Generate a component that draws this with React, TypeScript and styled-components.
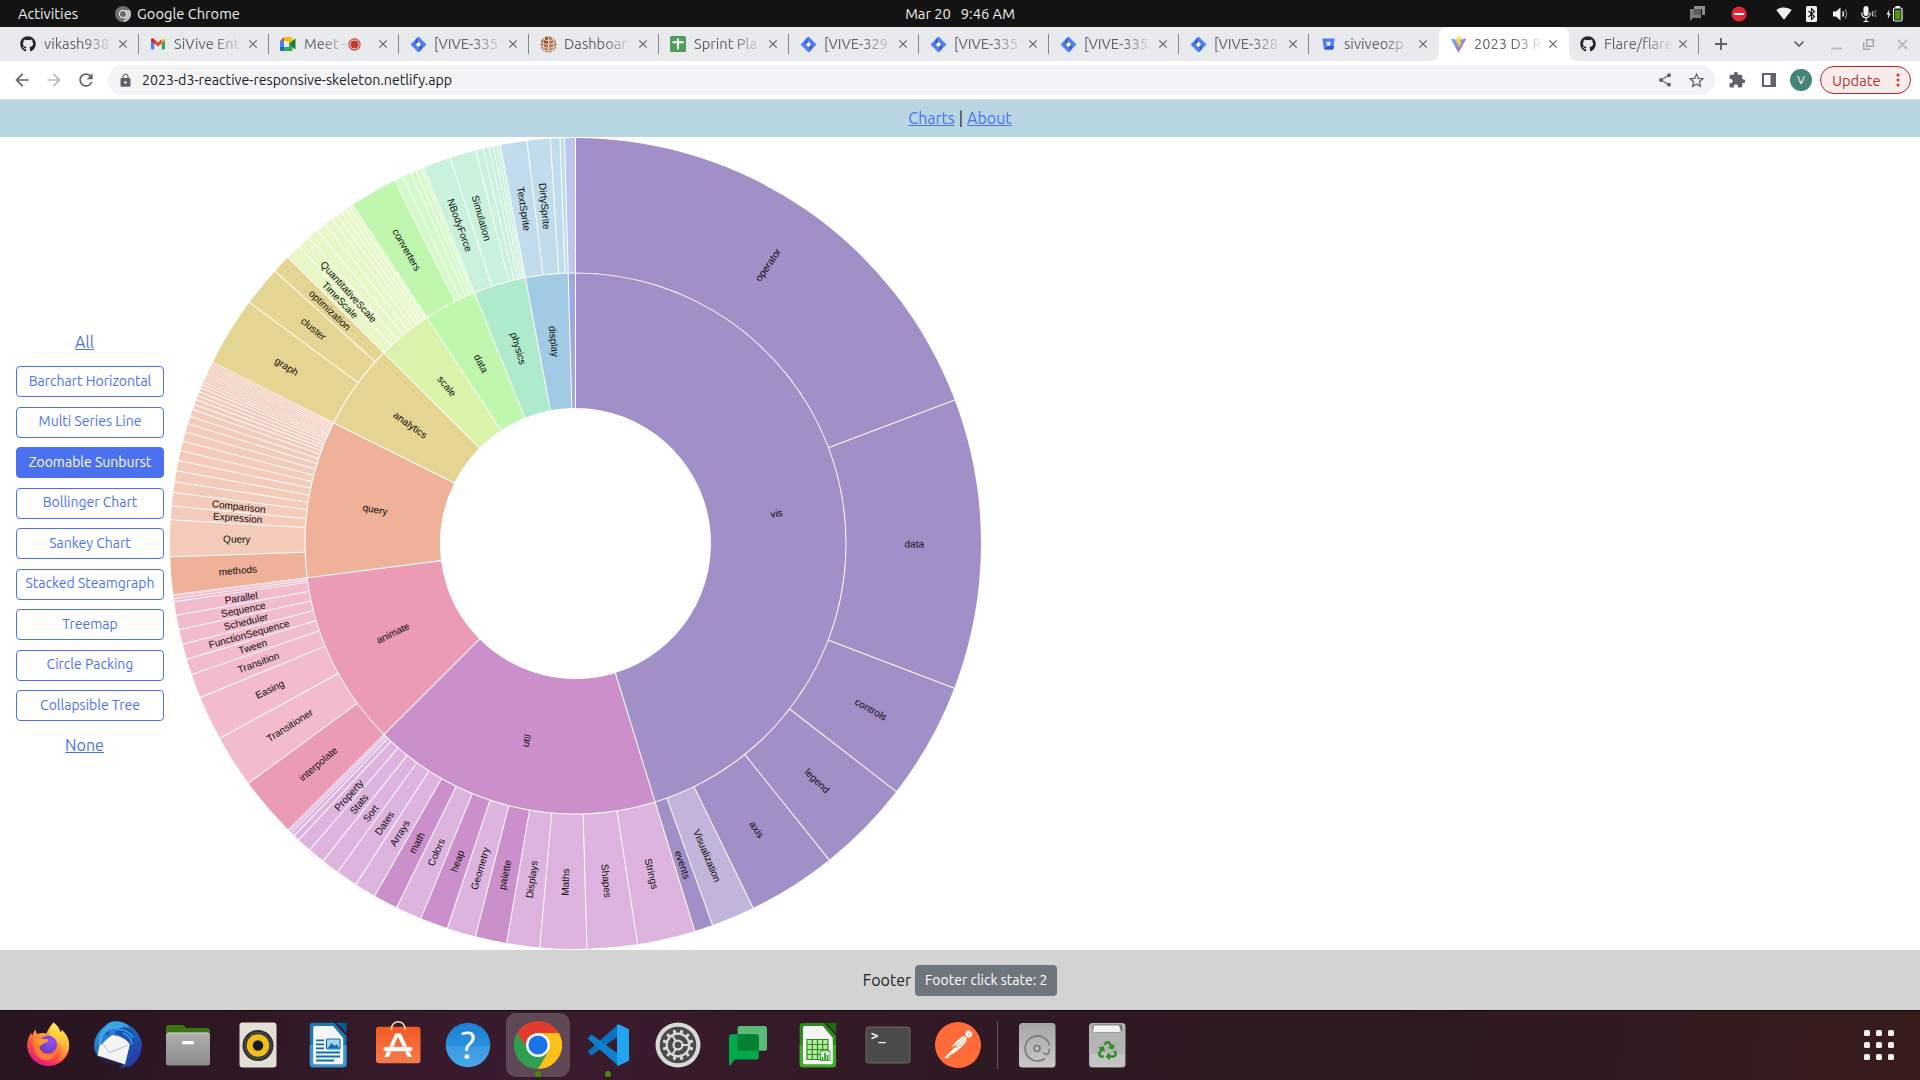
import React from "react";
import styled, { createGlobalStyle, css } from "styled-components";
import { FaGithub, FaRecycle } from "react-icons/fa";
import { MdStarBorder, MdShare, MdExtension, MdArrowBack, MdArrowForward, MdRefresh, MdLock, MdClose } from "react-icons/md";
import { SiPostman } from "react-icons/si";

const uiFont = `Ubuntu, "Noto Sans", "Open Sans", sans-serif`;

const GlobalStyle = createGlobalStyle`
  *, *::before, *::after { box-sizing: border-box; }
  html, body { margin: 0; padding: 0; overflow: hidden; background: #fff; }
  body { font-family: ${uiFont}; color: #212529; }
  svg { display: block; flex: none; }
`;

const Screen = styled.div`
  width: 1920px;
  height: 1080px;
  display: flex;
  flex-direction: column;
  overflow: hidden;
`;

/* ---------- desktop top bar ---------- */

const TopBar = styled.header`
  height: 27px;
  flex: none;
  background: #131313;
  color: #f0f0f0;
  font-size: 14.67px;
  line-height: 27px;
  display: grid;
  grid-template-columns: 1fr auto 1fr;
  align-items: center;
  white-space: pre;
`;
const TopLeft = styled.div`
  display: flex;
  align-items: center;
  padding-left: 18px;
`;
const AppMenu = styled.div`
  display: flex;
  align-items: center;
  gap: 6px;
  margin-left: 37px;
`;
const Clock = styled.div`
  display: flex;
  gap: 10px;
  font-size: 14.67px;
  line-height: 26px;
`;
const Tray = styled.div`
  display: flex;
  justify-content: flex-end;
  align-items: center;
  padding-right: 3px;
`;
const TrayItem = styled.div<{ $w: number }>`
  width: ${(p) => p.$w}px;
  display: flex;
  justify-content: center;
`;

/* ---------- browser chrome ---------- */

const TabStrip = styled.div`
  height: 34px;
  flex: none;
  background: #e8eaed;
  padding-left: 9px;
  display: flex;
`;
const TabBox = styled.div<{ $active?: boolean; $line?: boolean }>`
  position: relative;
  width: 130px;
  height: 34px;
  padding-left: 11px;
  display: flex;
  align-items: center;
  ${(p) =>
    p.$active &&
    css`
      background: #fff;
      border-radius: 8px 8px 0 0;
      &::before,
      &::after {
        content: "";
        position: absolute;
        bottom: 0;
        width: 8px;
        height: 8px;
      }
      &::before {
        left: -8px;
        background: radial-gradient(circle at 0 0, #e8eaed 7.5px, #fff 8px);
      }
      &::after {
        right: -8px;
        background: radial-gradient(circle at 100% 0, #e8eaed 7.5px, #fff 8px);
      }
    `}
`;
const TabIcon = styled.span`
  width: 16px;
  height: 16px;
  display: flex;
  align-items: center;
  justify-content: center;
`;
const TabTitle = styled.span<{ $w?: number }>`
  width: ${(p) => p.$w ?? 67}px;
  margin-left: 8px;
  overflow: hidden;
  white-space: nowrap;
  font-size: 14.67px;
  line-height: 20px;
  color: #5f6368;
  mask-image: linear-gradient(90deg, #000 calc(100% - 28px), rgba(0, 0, 0, 0.1) 100%);
`;
const TabClose = styled.span`
  margin-left: auto;
  margin-right: 8px;
  color: #5f6368;
`;
const TabLine = styled.span<{ $hidden?: boolean }>`
  width: 1px;
  height: 20px;
  background: ${(p) => (p.$hidden ? "transparent" : "#85888c")};
`;
const NewTab = styled.div`
  display: flex;
  align-items: center;
  padding-left: 15px;
`;
const WindowButtons = styled.div`
  margin-left: auto;
  margin-right: 12px;
  display: flex;
  align-items: center;
`;
const WindowButton = styled.span<{ $gap: number }>`
  margin-left: ${(p) => p.$gap}px;
`;

const Toolbar = styled.div`
  height: 39px;
  flex: none;
  background: #fff;
  border-bottom: 1px solid #d9dadc;
  display: flex;
  align-items: center;
  padding: 0 9px 0 12px;
`;
const NavButtons = styled.div`
  width: 96px;
  display: flex;
  gap: 12px;
  color: #5f6368;
  svg:nth-child(2) { color: #babcbe; }
`;
const Omnibox = styled.div`
  width: 1607px;
  height: 30px;
  border-radius: 15px;
  background: #f1f3f4;
  display: flex;
  align-items: center;
  padding: 0 9px 0 10px;
  font-size: 14.2px;
  color: #202124;
`;
const Url = styled.span`
  margin-left: 9px;
  margin-right: auto;
`;
const OmniIcon = styled.span`
  color: #5f6368;
  margin-left: 14px;
`;
const ToolIcons = styled.div`
  display: flex;
  align-items: center;
  color: #5f6368;
  margin-left: 13px;
  gap: 16px;
`;
const Avatar = styled.span`
  width: 22px;
  height: 22px;
  border-radius: 50%;
  background: #448577;
  color: #fff;
  font-size: 12px;
  line-height: 22px;
  text-align: center;
  margin-left: -2px;
`;
const UpdateButton = styled.div`
  margin-left: auto;
  width: 91px;
  height: 28px;
  border: 1px solid #b3261e;
  border-radius: 14px;
  background: #f8ecec;
  color: #b3332c;
  font-size: 14.67px;
  display: flex;
  align-items: center;
  justify-content: space-between;
  padding: 0 10px 0 11px;
`;

/* ---------- page ---------- */

const Nav = styled.nav`
  height: 37px;
  flex: none;
  background: #b9d7e2;
  display: flex;
  align-items: center;
  justify-content: center;
  gap: 4px;
  padding-bottom: 1px;
  font-size: 16px;
`;
const Link = styled.a`
  color: #4b71f0;
  text-decoration: underline;
`;
const Main = styled.main`
  flex: 1;
  min-height: 0;
  display: flex;
`;
const Sidebar = styled.aside`
  width: 169px;
  padding: 191px 5px 0 16px;
  display: flex;
  flex-direction: column;
`;
const SideLink = styled(Link)`
  width: 137px;
  height: 28px;
  text-align: center;
  font-size: 16px;
  line-height: 28px;
`;
const ButtonList = styled.div`
  margin: 10px 0 9.5px;
  display: flex;
  flex-direction: column;
  gap: 9.5px;
`;
const ChartButton = styled.button<{ $active?: boolean }>`
  width: 148px;
  height: 31px;
  padding: 0 0 2px;
  border: 1px solid #4b71f0;
  border-radius: 4px;
  background: ${(p) => (p.$active ? "#4b71f0" : "#fff")};
  color: ${(p) => (p.$active ? "#fff" : "#4b71f0")};
  font-family: inherit;
  font-size: 14px;
  white-space: nowrap;
`;
const Footer = styled.footer`
  height: 60px;
  flex: none;
  background: #d3d3d3;
  display: flex;
  align-items: center;
  justify-content: center;
  gap: 4px;
  padding-bottom: 1px;
  font-size: 16px;
`;
const FooterButton = styled.button`
  width: 142px;
  height: 31px;
  margin-top: 2px;
  border: 0;
  border-radius: 4px;
  background: #6f757d;
  color: #fff;
  font-family: inherit;
  font-size: 14px;
  padding: 0 0 1px;
`;

/* ---------- sunburst ---------- */

type Leaf = [name: string, value: number, branch?: boolean];
type Group = { name: string; color: [number, number, number]; items: Leaf[] };

const flare: Group[] = [
  {
    name: "vis", color: [163, 143, 200],
    items: [["operator", 183967, true], ["data", 110583, true], ["controls", 44639, true], ["legend", 36003, true], ["axis", 33886, true], ["Visualization", 16540], ["events", 7011, true]],
  },
  {
    name: "util", color: [203, 143, 204],
    items: [["Strings", 22026], ["Shapes", 19118], ["Maths", 17705], ["Displays", 12555], ["palette", 11946, true], ["Geometry", 10993], ["heap", 10587, true], ["Colors", 10001], ["math", 9346, true], ["Arrays", 8258], ["Dates", 8217], ["Sort", 6887], ["Stats", 6557], ["Property", 5559], ["Filter", 2324], ["Orientation", 1486], ["IValueProxy", 874], ["IPredicate", 383], ["IEvaluable", 335]],
  },
  {
    name: "animate", color: [236, 155, 180],
    items: [["interpolate", 23081, true], ["Transitioner", 19975], ["Easing", 17010], ["Transition", 9201], ["Tween", 6006], ["FunctionSequence", 5842], ["Scheduler", 5593], ["Sequence", 5534], ["Parallel", 5176], ["TransitionEvent", 1116], ["ISchedulable", 1041], ["Pause", 449]],
  },
  {
    name: "query", color: [239, 177, 152],
    items: [["methods", 14326, true], ["Query", 13896], ["Expression", 5130], ["Comparison", 5103], ["DateUtil", 4141], ["StringUtil", 4130], ["Arithmetic", 3891], ["Match", 3748], ["CompositeExpression", 3677], ["ExpressionIterator", 3617], ["Fn", 3240], ["BinaryExpression", 2893], ["If", 2732], ["IsA", 2039], ["Variance", 1876], ["AggregateExpression", 1616], ["Range", 1594], ["Not", 1554], ["Literal", 1214], ["Variable", 1124], ["Xor", 1101], ["And", 1027], ["Or", 970], ["Distinct", 933], ["Average", 891], ["Maximum", 843], ["Minimum", 843], ["Sum", 791], ["Count", 781]],
  },
  {
    name: "analytics", color: [229, 213, 146],
    items: [["graph", 26435, true], ["cluster", 15207, true], ["optimization", 7074, true]],
  },
  {
    name: "scale", color: [217, 244, 170],
    items: [["TimeScale", 5833], ["QuantitativeScale", 4839], ["Scale", 4268], ["OrdinalScale", 3770], ["LogScale", 3151], ["QuantileScale", 2435], ["IScaleMap", 2105], ["ScaleType", 1821], ["RootScale", 1756], ["LinearScale", 1316]],
  },
  {
    name: "data", color: [191, 247, 175],
    items: [["converters", 18349, true], ["DataSource", 3331], ["DataUtil", 3322], ["DataSchema", 2165], ["DataField", 1759], ["DataTable", 772], ["DataSet", 586]],
  },
  {
    name: "physics", color: [174, 234, 203],
    items: [["NBodyForce", 10498], ["Simulation", 9983], ["Particle", 2822], ["Spring", 2213], ["SpringForce", 1681], ["GravityForce", 1336], ["DragForce", 1082], ["IForce", 319]],
  },
  {
    name: "display", color: [161, 202, 228],
    items: [["TextSprite", 10066], ["DirtySprite", 8833], ["RectSprite", 3623], ["LineSprite", 1732]],
  },
  { name: "flex", color: [159, 168, 230], items: [["FlareVis", 4116]] },
];

const SIZE = 813;
const RING = SIZE / 6;

const arcPath = (a0: number, a1: number, level: number) => {
  const r0 = level * RING;
  const r1 = (level + 1) * RING - 1;
  const half = Math.min((a1 - a0) / 2, 0.005) / 2;
  const padR = RING * 1.5;
  const inset = (r: number): [number, number] => {
    const p = Math.asin(Math.min(1, (padR / r) * Math.sin(half)));
    const mid = (a0 + a1) / 2;
    return a1 - a0 - 2 * p > 1e-6 ? [a0 + p, a1 - p] : [mid, mid];
  };
  const at = (r: number, a: number) => `${(r * Math.sin(a)).toFixed(3)},${(-r * Math.cos(a)).toFixed(3)}`;
  const [o0, o1] = inset(r1);
  const [i0, i1] = inset(r0);
  const big = (s: number, e: number) => (e - s > Math.PI ? 1 : 0);
  return `M${at(r1, o0)}A${r1},${r1} 0 ${big(o0, o1)} 1 ${at(r1, o1)}L${at(r0, i1)}A${r0},${r0} 0 ${big(i0, i1)} 0 ${at(r0, i0)}Z`;
};

const shade = (c: [number, number, number], solid: boolean) =>
  `rgb(${c.map((v) => Math.round(solid ? v : 255 - ((255 - v) * 2) / 3)).join(",")})`;

const ChartLabel = styled.text`
  font: 10px "Liberation Sans", Arial, sans-serif;
  text-anchor: middle;
  fill: #0b0b0b;
  user-select: none;
`;

type Slice = { key: string; name: string; a0: number; a1: number; level: number; fill: string };

const buildSlices = (): Slice[] => {
  const total = flare.reduce((s, g) => s + g.items.reduce((t, i) => t + i[1], 0), 0);
  const k = (2 * Math.PI) / total;
  const out: Slice[] = [];
  let a = 0;
  flare.forEach((g) => {
    const start = a;
    g.items.forEach(([name, value, branch]) => {
      out.push({ key: `${g.name}/${name}`, name, a0: a, a1: a + value * k, level: 2, fill: shade(g.color, !!branch) });
      a += value * k;
    });
    out.push({ key: g.name, name: g.name, a0: start, a1: a, level: 1, fill: shade(g.color, true) });
  });
  return out;
};

const slices = buildSlices();

const Sunburst = () => (
  <svg width={SIZE} height={SIZE} viewBox={`${-SIZE / 2} ${-SIZE / 2} ${SIZE} ${SIZE}`}>
    {slices.map((s) => (
      <path key={s.key} d={arcPath(s.a0, s.a1, s.level)} fill={s.fill} />
    ))}
    {slices
      .filter((s) => s.a1 - s.a0 > 0.03)
      .map((s) => {
        const deg = ((s.a0 + s.a1) / 2) * (180 / Math.PI);
        return (
          <ChartLabel
            key={s.key}
            dy="0.35em"
            transform={`rotate(${deg - 90}) translate(${(s.level + 0.5) * RING},0) rotate(${deg < 180 ? 0 : 180})`}
          >
            {s.name}
          </ChartLabel>
        );
      })}
  </svg>
);

/* ---------- favicons ---------- */

const GmailIcon = () => (
  <svg width="14" height="12" viewBox="0 0 14 11">
    <path d="M0 1.5V10a1 1 0 0 0 1 1h2.2V4.5z" fill="#4285f4" />
    <path d="M14 1.5V10a1 1 0 0 1-1 1h-2.200V4.500z" fill="#34a853" />
    <path d="M14 1.600L10.800 4.800V1.200C12.400-.2 14-.2 14 1.600z" fill="#fbbc04" />
    <path d="M0 1.600C0-.2 1.800-.5 3.200.8L7 3.900 10.800.8v4L7 7.900 3.200 4.900z" fill="#ea4335" />
    <path d="M0 1.600C0 0 1.700-.4 3.200.8v4.100L0 2.600z" fill="#c5221f" />
  </svg>
);
const MeetIcon = () => (
  <svg width="16" height="14" viewBox="0 0 16 14">
    <path d="M0 4L4 0v4z" fill="#ea4335" />
    <path d="M0 4h4v6H0z" fill="#4285f4" />
    <path d="M0 10h4v4H1.200A1.200 1.200 0 0 1 0 12.800z" fill="#1967d2" />
    <path d="M4 0h7.500a1 1 0 0 1 1 1v3.500L9 7V4H4z" fill="#fbbc04" />
    <path d="M4 10h5V7l3.500 3v3a1 1 0 0 1-1 1H4z" fill="#34a853" />
    <path d="M9 7l5.500-5c.6-.4 1-.1 1 .5v9c0 .6-.4.900-1 .5z" fill="#188038" />
  </svg>
);
const JiraIcon = () => (
  <svg width="17" height="17" viewBox="0 0 17 17">
    <path d="M8.500.5L16.500 8.500 8.500 16.500.5 8.500z" fill="#4f7ff5" />
    <path d="M8.500.5c-2 2-2 4 0 5.800L5.500 9V3.500zM8.500 16.500c2-2 2-4 0-5.800l3-2.700v5.500z" fill="#2c56cf" />
    <path d="M8.500 5.800l2.700 2.700-2.700 2.700-2.700-2.700z" fill="#fff" />
  </svg>
);
const GlobeIcon = () => (
  <svg width="17" height="17" viewBox="0 0 17 17" fill="none" stroke="#f0dccf" strokeWidth=".9">
    <circle cx="8.500" cy="8.500" r="8" fill="#b0785a" stroke="none" />
    <path d="M8 .6C4 1 1.500 4 1 7c2 1.500 4 2 7 1.500z" fill="#9a4f2a" stroke="none" />
    <path d="M1 6c4 3 11 3 15 0M.7 9.500c4 3.500 12 3.500 15.600 0M2.500 13c3.500 2.500 8.500 2.500 12 0M3 3c3 2 8 2 11 0M8.500 1v15.500M5 1.500c-2.500 4-2.500 10 0 14M12 1.500c2.500 4 2.500 10 0 14" />
  </svg>
);
const SheetsIcon = () => (
  <svg width="16" height="16" viewBox="0 0 16 16">
    <rect width="16" height="16" rx="1.500" fill="#4f9f5c" />
    <path d="M2.500 6.200h11M8 2.500v11" stroke="#fff" strokeWidth="1.900" />
  </svg>
);
const BitbucketIcon = () => (
  <svg width="13" height="12" viewBox="0 0 13 12">
    <path d="M.3.5h12.400L11 11.500H2z" fill="#4f7ff5" />
    <path d="M6 8h6l-.8 3.500H2z" fill="#2c56cf" />
    <path d="M4.300 3.800h4.400L8 7.800H5z" fill="#e8eefc" />
  </svg>
);
const ViteIcon = () => (
  <svg width="17" height="17" viewBox="0 0 17 17">
    <defs>
      <linearGradient id="vite-v" x1="0" y1="0" x2=".7" y2="1">
        <stop offset="0" stopColor="#5cc8f7" />
        <stop offset="1" stopColor="#a649f0" />
      </linearGradient>
      <linearGradient id="vite-b" x1="0" y1="0" x2="0" y2="1">
        <stop offset="0" stopColor="#fbe35c" />
        <stop offset="1" stopColor="#f5a623" />
      </linearGradient>
    </defs>
    <path d="M.5 2.500l7.800 1.400 8.200-1.400L8.500 16.500z" fill="url(#vite-v)" />
    <path d="M12 .3L6.500 1.400 6.100 7.500l1.700-.4-.5 2.500 1.500-.4-1 5.300 4.300-8.300-1.900.3z" fill="url(#vite-b)" />
  </svg>
);
const GithubIcon = () => <FaGithub size={16} color="#24292e" />;
const RecordIcon = () => (
  <svg width="13" height="13" viewBox="0 0 13 13">
    <circle cx="6.500" cy="6.500" r="5.600" fill="none" stroke="#c5392f" strokeWidth="1.100" />
    <circle cx="6.500" cy="6.500" r="4" fill="#c5392f" />
  </svg>
);

type TabDef = { title: string; icon: React.FC; active?: boolean; recording?: boolean; line?: boolean };
const tabs: TabDef[] = [
  { title: "vikash938", icon: GithubIcon },
  { title: "SiVive Ent", icon: GmailIcon },
  { title: "Meet –", icon: MeetIcon, recording: true },
  { title: "[VIVE-335", icon: JiraIcon },
  { title: "Dashboar", icon: GlobeIcon },
  { title: "Sprint Pla", icon: SheetsIcon },
  { title: "[VIVE-329", icon: JiraIcon },
  { title: "[VIVE-335", icon: JiraIcon },
  { title: "[VIVE-335", icon: JiraIcon },
  { title: "[VIVE-328", icon: JiraIcon },
  { title: "siviveozp", icon: BitbucketIcon, line: false },
  { title: "2023 D3 R", icon: ViteIcon, active: true, line: false },
  { title: "Flare/flare", icon: GithubIcon },
];

/* ---------- dock icons (48 × 48) ---------- */

const Icon48 = ({ children }: { children: React.ReactNode }) => (
  <svg width="48" height="48" viewBox="0 0 48 48">
    {children}
  </svg>
);

const Firefox = () => (
  <Icon48>
    <defs>
      <linearGradient id="ff-a" x1=".8" y1=".05" x2=".3" y2="1">
        <stop offset="0" stopColor="#fff14f" />
        <stop offset=".35" stopColor="#ffa52f" />
        <stop offset=".65" stopColor="#ff4f3f" />
        <stop offset="1" stopColor="#e3148a" />
      </linearGradient>
      <linearGradient id="ff-c" x1=".4" y1="0" x2=".3" y2="1">
        <stop offset="0" stopColor="#fff04d" />
        <stop offset=".6" stopColor="#ffb03a" />
        <stop offset="1" stopColor="#ff5a45" />
      </linearGradient>
      <radialGradient id="ff-b" cx=".65" cy=".3" r=".8">
        <stop offset="0" stopColor="#9a4cf5" />
        <stop offset="1" stopColor="#5a3fc0" />
      </radialGradient>
    </defs>
    <path d="M29.500 1.500c3 2.500 6 5.500 7 10 1-.5 1.300-1.500 1.300-2.500C43 13.500 45.500 19 45.200 25.500 44.800 36.500 35.500 45 24.500 45S3.500 36 3.200 25c-.1-6 2.300-10.500 4.300-13.200 0 1.200.3 2.200.8 3C9 12 10 10 12 8.500c-.2 2 .3 3.500 1.500 4.500 3-1 6-1.300 9-.2 1-4 4-8 7-11.300z" fill="url(#ff-a)" />
    <path d="M29.500 1.500c3 2.500 6 5.500 7 10 1-.5 1.300-1.500 1.300-2.500 7 7 8.500 15 5.500 22-2.500 5-7 9-12 10 5-4 7.500-8 6.500-14-1-5-6-8-9.500-11-3-3-3-9 1.200-14.500z" fill="url(#ff-c)" />
    <circle cx="24" cy="23.500" r="9" fill="url(#ff-b)" />
    <path d="M9 18c3-2 7-1.500 9 .3 2-.8 5-.4 6.500.7-.5 2-3 3-5.500 3.500-1 1.200-1.500 2.200-3.500 2.800 0 5 3.500 8.200 8.500 8.200 4 0 7.500-2 9.500-6 0 7-5 11.500-11 11.500C14 39 8.500 31 9 18z" fill="#ff7a35" />
    <path d="M9 18c3-2 7-1.500 9 .3 2-.8 5-.4 6.500.7-.5 2-3 3-5.500 3.500-1 1-2 1.500-3.500 1.500-2-1-5-3-6.500-6z" fill="#ff9a32" />
  </Icon48>
);
const Thunderbird = () => (
  <Icon48>
    <defs>
      <linearGradient id="tb-a" x1=".1" y1="0" x2=".9" y2="1">
        <stop offset="0" stopColor="#2f9be0" />
        <stop offset=".5" stopColor="#1f62bd" />
        <stop offset="1" stopColor="#2b2f9c" />
      </linearGradient>
    </defs>
    <path d="M0 25C0 17 5 9 11 5c3-3 6-5 9-4.500 1 .2 1 .8 0 1C34 0 46 10 48 23c0 10-5 20-15 24 1-1 1-1.500 0-2-2 1.500-5 2.500-8 2 2-1 3-2 3-3L12 41C5 38 0 32 0 25z" fill="url(#tb-a)" />
    <path d="M3.500 33.500L30 43l-1 1.500L12 41C8 39.500 5 37 3.500 33.500z" fill="#2a1c4a" />
    <path d="M6.500 19.500L3.500 34.500 31 43.500l5-20C31 16 22 14 17 14z" fill="#f4f4f6" />
    <path d="M6.500 20l9 11.500 18-7" fill="none" stroke="#adadb5" strokeWidth=".8" />
    <path d="M15 2c8-4 18 0 20 4-5-1-9 0-12 3-3 4-8 6-11 9l-3 3-4 4c-1-7 0-16 10-23z" fill="#37a4e6" />
    <path d="M12 11c3-3 8-4 12-2-3 4-8 6-11 9l-6 6c0-5 2-10 5-13z" fill="#2b7fd0" />
    <path d="M23 9c7-4 14-2 18 4-2-1-4-1-5 0 5 4 6 9 5 15l-3-4c1 7-1 12-5 19l-1-1 4-19c-2-6-8-9-15-10z" fill="#1c4fae" />
    <path d="M24 9c6-1 12 2 15 8M29 12c5 2 8 6 9 11" fill="none" stroke="#3ba3e8" strokeWidth="1.500" />
    <circle cx="13.500" cy="12.500" r="1.100" fill="#0a1c45" />
  </Icon48>
);
const Files = () => (
  <Icon48>
    <defs>
      <linearGradient id="fi-a" x1="0" y1="0" x2="0" y2="1">
        <stop offset="0" stopColor="#aeaeae" />
        <stop offset="1" stopColor="#8d8d8d" />
      </linearGradient>
    </defs>
    <path d="M2 6.500A2.500 2.500 0 0 1 4.500 4H18c1.500 0 2 .5 2.700 1.500.8 1.100 1.300 1.500 2.800 1.500h20A2.500 2.500 0 0 1 46 9.500V20H2z" fill="#3d7513" />
    <rect x="2" y="11.500" width="44" height="33" rx="2.500" fill="url(#fi-a)" />
    <path d="M4 12h40" stroke="#cfcfcf" strokeWidth=".8" />
    <rect x="18" y="20" width="12" height="3.200" rx="1" fill="#fff" />
  </Icon48>
);
const Rhythmbox = () => (
  <Icon48>
    <rect x="5.500" y="1.500" width="37" height="45" rx="3" fill="#e4dfd5" />
    <circle cx="24" cy="24.500" r="15.500" fill="#2c2f31" />
    <circle cx="24" cy="24.500" r="13.200" fill="none" stroke="#55595b" strokeWidth="1" />
    <circle cx="24" cy="24.500" r="11.300" fill="#f0bd1a" />
    <circle cx="24" cy="24.500" r="5.200" fill="#17191a" />
  </Icon48>
);
const Writer = () => (
  <Icon48>
    <path d="M8.500 1.800H30L42.500 15v28.500a2.800 2.800 0 0 1-2.800 2.800H8.500A2.800 2.800 0 0 1 5.800 43.500v-39a2.800 2.800 0 0 1 2.700-2.700z" fill="#1a79b3" />
    <path d="M5.800 24h36.700v19.500a2.800 2.800 0 0 1-2.800 2.800H8.500A2.800 2.800 0 0 1 5.800 43.500z" fill="#3c97cf" />
    <path d="M11 5h18l10.200 12v24.500a1.800 1.800 0 0 1-1.800 1.800H11a1.800 1.800 0 0 1-1.800-1.800V6.800A1.800 1.800 0 0 1 11 5z" fill="#f6f6f6" />
    <path d="M32.500 1.800H42.500V12z" fill="#0b5b8f" />
    <path d="M12 19.300h8M12 23.300h8M12 27.300h8M12 31.500h24M12 35.500h24M12 39.500h18" stroke="#0f6fae" strokeWidth="1.800" />
    <rect x="22.500" y="18" width="13.500" height="10" rx="1" fill="#a8d8f0" stroke="#0f6fae" strokeWidth="1.200" />
    <path d="M23.500 27.500l4-5.500 3 3 2-2 3 4.500z" fill="#0f6fae" />
  </Icon48>
);
const Software = () => (
  <Icon48>
    <defs>
      <linearGradient id="so-a" x1="0" y1="0" x2="0" y2="1">
        <stop offset="0" stopColor="#f55a22" />
        <stop offset="1" stopColor="#f47b4c" />
      </linearGradient>
    </defs>
    <rect x="2" y="5.800" width="44.500" height="36.500" rx="3" fill="url(#so-a)" />
    <path d="M17.500 9V7.500a6.700 6.700 0 0 1 13.400 0V9" fill="none" stroke="#f7dcae" strokeWidth="1.600" />
    <path d="M21.300 12.500h5.600L38 36h-4.500L24 15.800 14.700 36H10.300z" fill="#fff" />
    <rect x="9.500" y="25.800" width="29" height="4.800" rx="2" fill="#fff" stroke="#f4714a" strokeWidth=".5" />
  </Icon48>
);
const HelpMark = styled.text`
  font: 39px Ubuntu, "Noto Sans", sans-serif;
  fill: #fff;
  text-anchor: middle;
`;
const Help = () => (
  <Icon48>
    <defs>
      <linearGradient id="he-a" x1="0" y1="0" x2="0" y2="1">
        <stop offset="0" stopColor="#1c80d3" />
        <stop offset=".52" stopColor="#2a8fdd" />
        <stop offset=".54" stopColor="#3b9be2" />
        <stop offset="1" stopColor="#49a6e8" />
      </linearGradient>
    </defs>
    <circle cx="24" cy="24" r="22.300" fill="url(#he-a)" />
    <HelpMark x="24" y="38">?</HelpMark>
  </Icon48>
);
const Chrome = () => (
  <Icon48>
    <circle cx="24" cy="24" r="24" fill="#e33b2e" />
    <path d="M3.200 12A24 24 0 0 0 24 48l9.500-18.500-19-.2z" fill="#2fa04f" />
    <path d="M24 48A24 24 0 0 0 44.800 12H24l10.400 18z" fill="#fdc21a" />
    <path d="M3.200 12l10.400 18L24 36 34.400 30 24 48" fill="#2fa04f" />
    <circle cx="24" cy="24" r="12" fill="#fff" />
    <circle cx="24" cy="24" r="9.600" fill="#1b73e8" />
  </Icon48>
);
const VsCode = () => (
  <Icon48>
    <path d="M34.500 3L3.500 30.500 7.500 34.500 34.500 15z" fill="#0a72bd" />
    <path d="M34.500 45L3.500 17.500l4-4L34.500 33z" fill="#0e7fcc" />
    <path d="M33.800 3L45 8.300V39.700L33.800 45l-.8-1.500V4.500z" fill="#23a4f0" />
  </Icon48>
);
const teeth = Array.from({ length: 12 }, (_, i) => i * 30);
const Settings = () => (
  <Icon48>
    <circle cx="24" cy="24" r="22.500" fill="#d9d9d9" />
    <circle cx="24" cy="24" r="18.300" fill="#4b4b4b" />
    {teeth.map((d) => (
      <rect key={d} x="22.500" y="8.500" width="3" height="5" rx="1" fill="#d9d9d9" transform={`rotate(${d + 15} 24 24)`} />
    ))}
    <circle cx="24" cy="24" r="11.300" fill="none" stroke="#d9d9d9" strokeWidth="2.200" />
    <path d="M24 24h11M24 24l-5.500 9.500M24 24l-5.500-9.500" stroke="#d9d9d9" strokeWidth="2.200" />
    <circle cx="24" cy="24" r="5.600" fill="#d9d9d9" />
    <circle cx="24" cy="24" r="3.300" fill="#4b4b4b" />
  </Icon48>
);
const Chat = () => (
  <Icon48>
    <rect x="13.600" y="5" width="29.400" height="24.700" rx="2.500" fill="#5dba76" />
    <path d="M7.500 13.200h24.800a2.500 2.500 0 0 1 2.500 2.500v20.200a2.500 2.500 0 0 1-2.500 2.500H11L6.300 44.300C5.700 45 5 44.800 5 44V15.700a2.500 2.500 0 0 1 2.500-2.500z" fill="#00a94b" />
    <path d="M13.600 13.200h18.700a2.500 2.500 0 0 1 2.500 2.500v14H16.100a2.500 2.500 0 0 1-2.500-2.500z" fill="#028230" />
  </Icon48>
);
const Calc = () => (
  <Icon48>
    <path d="M8.500 2H30l12 12.500v29a2.800 2.800 0 0 1-2.800 2.800H8.500A2.800 2.800 0 0 1 5.700 43.500v-39A2.800 2.800 0 0 1 8.500 2z" fill="#2a8f17" />
    <path d="M5.700 24H42v19.500a2.800 2.800 0 0 1-2.800 2.800H8.500a2.800 2.800 0 0 1-2.800-2.800z" fill="#3fae2a" />
    <path d="M10.800 5h18l10 12v24.500a1.800 1.800 0 0 1-1.800 1.800H10.800A1.800 1.800 0 0 1 9 41.500V6.800A1.800 1.800 0 0 1 10.800 5z" fill="#f6f6f6" />
    <path d="M32 2h10.200v10.500z" fill="#1c6d0e" />
    <rect x="13" y="18.500" width="21" height="20" fill="#b7e8a8" />
    <path d="M13 18.500h21v20H13zM18.300 18.500v20M23.500 18.500v20M28.700 18.500v20M13 23.500h21M13 28.500h21M13 33.500h21" fill="none" stroke="#2a8f17" strokeWidth="1.200" />
    <rect x="26.500" y="30" width="9.500" height="9.500" fill="#e9f8e4" stroke="#2a8f17" strokeWidth=".8" />
    <path d="M28.500 39v-3M31 39v-7M33.500 39v-5" stroke="#2a8f17" strokeWidth="1.600" />
  </Icon48>
);
const Prompt = styled.text`
  font: bold 12px "DejaVu Sans Mono", monospace;
  fill: #fff;
`;
const Terminal = () => (
  <Icon48>
    <rect x="2" y="6" width="44" height="36" rx="3" fill="#4a4a4a" stroke="#6a6a6a" strokeWidth="1" />
    <Prompt x="7" y="19">&gt;_</Prompt>
  </Icon48>
);
const Postman = () => (
  <svg width="46" height="46" viewBox="0 0 46 46">
    <circle cx="23" cy="23" r="21" fill="#fff" />
    <SiPostman size={46} color="#ff6c37" />
  </svg>
);
const Disk = () => (
  <Icon48>
    <defs>
      <linearGradient id="di-a" x1="0" y1="0" x2="0" y2="1">
        <stop offset="0" stopColor="#a6a6a6" />
        <stop offset="1" stopColor="#c9c9c9" />
      </linearGradient>
    </defs>
    <rect x="6" y="2" width="36.500" height="44.500" rx="3.500" fill="url(#di-a)" />
    <path d="M32 37.500A12.500 12.500 0 1 1 36.700 24.500" fill="none" stroke="#7a7a7a" strokeWidth="1.600" />
    <circle cx="24" cy="27.500" r="3" fill="none" stroke="#7a7a7a" strokeWidth="1.600" />
    <path d="M36.500 27.500a12.500 12.500 0 0 1-1.800 6l-4.500-1.500" fill="none" stroke="#7a7a7a" strokeWidth="1.500" strokeLinejoin="round" />
  </Icon48>
);
const Trash = () => (
  <Icon48>
    <rect x="6" y="2" width="36.500" height="44.500" rx="3.500" fill="#b4b4b4" />
    <path d="M7 33h34.500v10.500a2.500 2.500 0 0 1-2.500 2.500H9.500A2.500 2.500 0 0 1 7 43.500z" fill="#c4c4c4" />
    <rect x="9.500" y="3.500" width="29.500" height="8" rx="2" fill="#6d6d6d" />
    <path d="M11 4.500h25l2 6.500H10zM13 7h22M12 9h25" fill="#fff" stroke="#c4c4c4" strokeWidth=".5" />
    <FaRecycle x="15" y="20" size={19} color="#2c8f22" />
  </Icon48>
);

/* ---------- dock ---------- */

const Dock = styled.div`
  height: 70px;
  flex: none;
  border-top: 1px solid #120b10;
  background: linear-gradient(100deg, #27151f 0%, #2e1824 12%, #371b2c 22%, #391b2d 32%, #2f1923 52%, #2d1a20 75%, #381c1c 100%);
  display: flex;
  align-items: center;
  padding: 0 0 2px 13px;
`;
const DockItem = styled.div<{ $active?: boolean }>`
  position: relative;
  width: 64px;
  height: 64px;
  margin: 0 3px;
  border-radius: 10px;
  display: flex;
  align-items: center;
  justify-content: center;
  background: ${(p) => (p.$active ? "rgba(255, 255, 255, 0.2)" : "transparent")};
`;
const RunningDot = styled.span`
  position: absolute;
  left: 29px;
  bottom: 0;
  width: 6px;
  height: 6px;
  border-radius: 50%;
  background: #4f8a0b;
`;
const DockDivider = styled.span`
  width: 1px;
  height: 48px;
  margin: 0 4px;
  background: #65535d;
`;
const AppGrid = styled.div`
  margin-left: auto;
  margin-right: 26px;
  display: grid;
  grid-template-columns: repeat(3, 6px);
  gap: 6px;
`;
const GridDot = styled.span`
  height: 6px;
  border-radius: 1.5px;
  background: #f4f2f2;
`;

type DockDef = { icon: React.FC; active?: boolean; running?: boolean };
const dockApps: DockDef[] = [
  { icon: Firefox }, { icon: Thunderbird }, { icon: Files }, { icon: Rhythmbox }, { icon: Writer },
  { icon: Software }, { icon: Help }, { icon: Chrome, active: true, running: true }, { icon: VsCode, running: true },
  { icon: Settings }, { icon: Chat }, { icon: Calc }, { icon: Terminal }, { icon: Postman },
];
const dockPlaces: DockDef[] = [{ icon: Disk }, { icon: Trash }];

const charts = [
  "Barchart Horizontal", "Multi Series Line", "Zoomable Sunburst", "Bollinger Chart", "Sankey Chart",
  "Stacked Steamgraph", "Treemap", "Circle Packing", "Collapsible Tree",
];

const renderDockItem = (d: DockDef, i: number) => {
  const I = d.icon;
  return (
    <DockItem key={i} $active={d.active}>
      <I />
      {d.running && <RunningDot />}
    </DockItem>
  );
};

export default function App() {
  return (
    <Screen>
      <GlobalStyle />
      <TopBar>
        <TopLeft>
          <span>Activities</span>
          <AppMenu>
            <svg width="16" height="16" viewBox="0 0 16 16">
              <circle cx="8" cy="8" r="8" fill="#6f6f6f" />
              <path d="M8 4h7A8 8 0 0 1 8 16l3.500-6z" fill="#bdbdbd" />
              <circle cx="8" cy="8" r="4.200" fill="#e8e8e8" />
              <circle cx="8" cy="8" r="3" fill="#6a6a6a" />
            </svg>
            <span>Google Chrome</span>
          </AppMenu>
        </TopLeft>
        <Clock>
          <span>Mar 20</span>
          <span>9:46 AM</span>
        </Clock>
        <Tray>
          <TrayItem $w={43}>
            <svg width="15" height="15" viewBox="0 0 15 15">
              <path d="M4 0h11v9h-3V3H4z" fill="#8d8d8d" />
              <path d="M0 3h11v9H3l-3 3z" fill="#7b7b7b" />
              <path d="M4 3h7v6H4z" fill="#5c5c5c" />
            </svg>
          </TrayItem>
          <TrayItem $w={40}>
            <svg width="16" height="16" viewBox="0 0 16 16">
              <circle cx="8" cy="8" r="7.600" fill="#e5243b" />
              <path d="M3 8h10" stroke="#fff" strokeWidth="2" />
            </svg>
          </TrayItem>
          <TrayItem $w={50}>
            <svg width="16" height="13" viewBox="0 0 16 13">
              <path d="M.3 3C4.500-.4 11.500-.4 15.700 3L8 12.700z" fill="#f2f2f2" />
            </svg>
          </TrayItem>
          <TrayItem $w={4}>
            <svg width="11" height="16" viewBox="0 0 11 16">
              <rect width="11" height="16" rx="1.500" fill="#f2f2f2" />
              <path d="M2.500 5l6 5.500-3 3V2.500l3 3-6 5.500" fill="none" stroke="#131313" strokeWidth="1.100" />
            </svg>
          </TrayItem>
          <TrayItem $w={54}>
            <svg width="15" height="14" viewBox="0 0 15 14">
              <path d="M0 4.500h3L7.500.5v13L3 9.500H0z" fill="#f2f2f2" />
              <path d="M9.500 4.500c1.300 1.500 1.300 3.500 0 5" fill="none" stroke="#f2f2f2" strokeWidth="1.300" />
              <path d="M11.800 2.500c2.400 2.600 2.400 6.400 0 9" fill="none" stroke="#8a8a8a" strokeWidth="1.300" />
            </svg>
          </TrayItem>
          <TrayItem $w={4}>
            <svg width="16" height="16" viewBox="0 0 16 16">
              <rect x="2.500" y="0" width="5" height="10" rx="2.500" fill="#f2f2f2" />
              <path d="M.7 6.500c0 7 8.600 7 8.600 0M5 12v3.500M2.500 15.500h5" fill="none" stroke="#f2f2f2" strokeWidth="1.200" />
              <path d="M12.500 5c-1.300 1.500-1.300 4 0 5.500" fill="none" stroke="#cfcfcf" strokeWidth="1.100" />
              <path d="M15.300 4c-1.800 2-1.800 5.500 0 7.500" fill="none" stroke="#7a7a7a" strokeWidth="1.100" />
            </svg>
          </TrayItem>
          <TrayItem $w={46}>
            <svg width="17" height="16" viewBox="0 0 17 16">
              <path d="M3.500 3L.5 8.500h2L1.800 13l3-5.500h-2z" fill="#f2f2f2" />
              <rect x="7.500" y="2" width="8.500" height="13" rx="1.500" fill="none" stroke="#f2f2f2" strokeWidth="1.200" />
              <rect x="9.500" y="0" width="4.500" height="2" fill="#f2f2f2" />
              <rect x="9" y="4" width="5.500" height="9.500" fill="#4e9a06" />
            </svg>
          </TrayItem>
        </Tray>
      </TopBar>

      <TabStrip>
        {tabs.map((t, i) => {
          const I = t.icon;
          return (
            <TabBox key={i} $active={t.active}>
              <TabIcon>
                <I />
              </TabIcon>
              <TabTitle $w={t.recording ? 44 : 67}>{t.title}</TabTitle>
              {t.recording && <RecordIcon />}
              <TabClose>
                <MdClose size={14} />
              </TabClose>
              <TabLine $hidden={t.line === false} />
            </TabBox>
          );
        })}
        <NewTab>
          <svg width="14" height="14" viewBox="0 0 14 14">
            <path d="M7 1v12M1 7h12" stroke="#5f6368" strokeWidth="1.900" />
          </svg>
        </NewTab>
        <WindowButtons>
          <svg width="12" height="8" viewBox="0 0 12 8">
            <path d="M1.500 1.500L6 6l4.500-4.500" fill="none" stroke="#5f6368" strokeWidth="1.700" />
          </svg>
          <WindowButton $gap={26}>
            <svg width="11" height="12" viewBox="0 0 11 12">
              <path d="M0 10.500h11" stroke="#b9bbbe" strokeWidth="1.800" />
            </svg>
          </WindowButton>
          <WindowButton $gap={21}>
            <svg width="11" height="11" viewBox="0 0 11 11" fill="none" stroke="#a3a5a8" strokeWidth="1.400">
              <path d="M3.700.7h6.600v6.600H3.700zM.7 3.500v6.800h6.800" />
            </svg>
          </WindowButton>
          <WindowButton $gap={23}>
            <svg width="11" height="11" viewBox="0 0 11 11">
              <path d="M1 1l9 9M10 1l-9 9" stroke="#b9bbbe" strokeWidth="1.800" />
            </svg>
          </WindowButton>
        </WindowButtons>
      </TabStrip>

      <Toolbar>
        <NavButtons>
          <MdArrowBack size={20} />
          <MdArrowForward size={20} />
          <MdRefresh size={20} />
        </NavButtons>
        <Omnibox>
          <MdLock size={15} color="#5f6368" />
          <Url>2023-d3-reactive-responsive-skeleton.netlify.app</Url>
          <OmniIcon>
            <MdShare size={16} />
          </OmniIcon>
          <OmniIcon>
            <MdStarBorder size={19} />
          </OmniIcon>
        </Omnibox>
        <ToolIcons>
          <MdExtension size={18} />
          <svg width="14" height="14" viewBox="0 0 14 14">
            <path d="M0 0h14v14H0zM2 2v10h6.500V2z" fill="#5f6368" fillRule="evenodd" />
          </svg>
          <Avatar>V</Avatar>
        </ToolIcons>
        <UpdateButton>
          <span>Update</span>
          <svg width="4" height="14" viewBox="0 0 4 14" fill="#c5392f">
            <circle cx="2" cy="2" r="1.500" />
            <circle cx="2" cy="7" r="1.500" />
            <circle cx="2" cy="12" r="1.500" />
          </svg>
        </UpdateButton>
      </Toolbar>

      <Nav>
        <Link>Charts</Link>
        <span>|</span>
        <Link>About</Link>
      </Nav>

      <Main>
        <Sidebar>
          <SideLink>All</SideLink>
          <ButtonList>
            {charts.map((c) => (
              <ChartButton key={c} $active={c === "Zoomable Sunburst"}>
                {c}
              </ChartButton>
            ))}
          </ButtonList>
          <SideLink>None</SideLink>
        </Sidebar>
        <Sunburst />
      </Main>

      <Footer>
        <span>Footer</span>
        <FooterButton>Footer click state: 2</FooterButton>
      </Footer>

      <Dock>
        {dockApps.map(renderDockItem)}
        <DockDivider />
        {dockPlaces.map(renderDockItem)}
        <AppGrid>
          {Array.from({ length: 9 }, (_, i) => (
            <GridDot key={i} />
          ))}
        </AppGrid>
      </Dock>
    </Screen>
  );
}
